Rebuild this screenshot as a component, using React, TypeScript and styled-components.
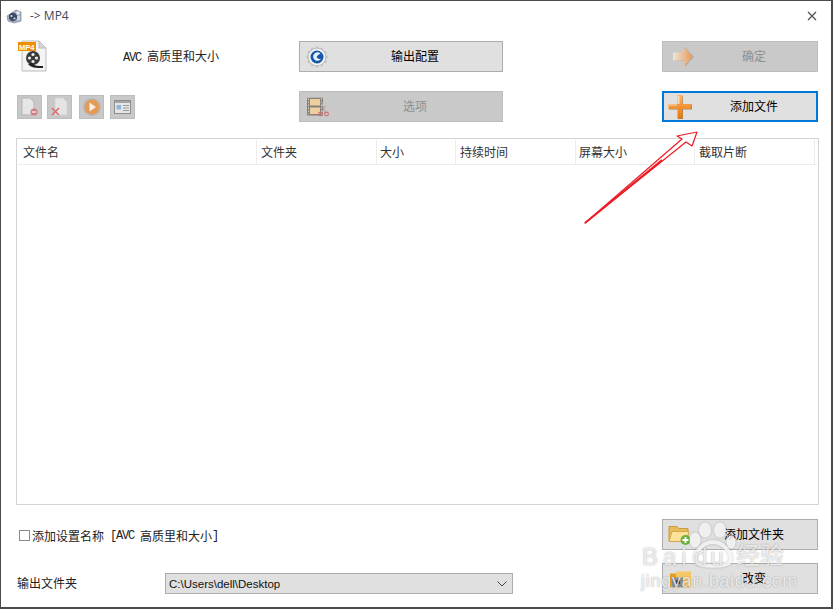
import styled, { createGlobalStyle } from "styled-components";

const GlobalStyle = createGlobalStyle`
  html, body {
    margin: 0;
    padding: 0;
    background: #fff;
  }
`;

const cjk = `"Noto Sans CJK SC", "Liberation Sans", sans-serif`;

const Window = styled.div`
  position: relative;
  box-sizing: border-box;
  width: 833px;
  height: 609px;
  overflow: hidden;
  background: #fff;
  border: 1px solid #4a4a4a;
  border-width: 1px 2px 2px 1px;
  font-family: ${cjk};
  font-size: 13px;
  color: #222;
`;

const TitleBar = styled.div`
  display: flex;
  align-items: center;
  height: 29px;
  padding: 0 14px 0 5px;
`;

const AppTitle = styled.span`
  margin-left: 8px;
  font-family: "Open Sans", sans-serif;
  font-size: 12px;
  color: #3a4a5a;
`;

const CloseButton = styled.div`
  display: flex;
  margin-left: auto;
`;

const Toolbar = styled.div`
  display: grid;
  grid-template-columns: 282px 204px 159px 156px;
  grid-template-rows: 31px 31px;
  row-gap: 19px;
  margin: 11px 0 0 16px;
`;

const PresetCell = styled.div`
  display: flex;
  align-items: center;
  padding-left: 1px;
`;

const PresetName = styled.span`
  margin-left: 75px;
  padding-bottom: 2px;
  font-size: 12px;
`;

const Latin = styled.span`
  font-family: "Liberation Mono", monospace;
  font-size: 12px;
  letter-spacing: -1.2px;
  white-space: pre;
`;

const SmallButtons = styled.div`
  display: flex;
  align-items: center;
`;

const SmallButton = styled.div<{ $gap: number }>`
  display: flex;
  align-items: center;
  justify-content: center;
  box-sizing: border-box;
  width: 25px;
  height: 24px;
  margin-right: ${(p) => p.$gap}px;
  background: #c8c8c8;
  border: 1px solid #bdbdbd;
`;

const Spacer = styled.div``;

const ActionButton = styled.div<{ $disabled?: boolean; $focused?: boolean }>`
  position: relative;
  display: flex;
  align-items: center;
  justify-content: center;
  box-sizing: border-box;
  width: 100%;
  height: 31px;
  font-size: 12px;
  background: ${(p) => (p.$disabled ? "#c9c9c9" : "#e0e0e0")};
  border: ${(p) =>
    p.$focused
      ? "2px solid #0078d7"
      : p.$disabled
      ? "1px solid #bdbdbd"
      : "1px solid #adadad"};
  color: ${(p) => (p.$disabled ? "#8f8f8f" : "#000")};
`;

const ButtonIcon = styled.span<{ $left: number }>`
  position: absolute;
  top: 50%;
  left: ${(p) => p.$left}px;
  display: flex;
  transform: translateY(-50%);
  filter: blur(0.3px);
`;

const ButtonLabel = styled.span<{ $shift?: number }>`
  margin-left: ${(p) => p.$shift ?? 0}px;
  padding-bottom: 2px;
`;

const FileTable = styled.div`
  box-sizing: border-box;
  width: 803px;
  height: 367px;
  margin: 16px 0 0 15px;
  padding: 1px;
  border: 1px solid #d4d4d4;
`;

const HeaderRow = styled.div`
  display: grid;
  grid-template-columns: 239px 120px 79px 120px 119px 120px;
  height: 24px;
  border-bottom: 1px solid #ececec;
`;

const HeaderCell = styled.div<{ $pad: number }>`
  display: flex;
  align-items: center;
  padding: 0 0 2px ${(p) => p.$pad}px;
  border-right: 1px solid #ececec;
  font-size: 12px;
  color: #333;
`;

const Footer = styled.div`
  display: grid;
  grid-template-columns: 148px 349px 148px 156px;
  grid-template-rows: 31px 31px;
  row-gap: 13px;
  align-items: center;
  margin: 14px 0 0 16px;
`;

const SettingCheck = styled.label`
  display: flex;
  align-items: center;
  grid-column: 1 / span 3;
  padding: 2px 0 0 2px;
  font-size: 12px;
`;

const CheckBox = styled.span`
  box-sizing: border-box;
  width: 11px;
  height: 11px;
  margin-right: 2px;
  background: #fff;
  border: 1px solid #8a8a8a;
`;

const OutputLabel = styled.span`
  padding-top: 7px;
  font-size: 12px;
`;

const PathSelect = styled.div`
  display: flex;
  align-items: center;
  justify-content: space-between;
  box-sizing: border-box;
  align-self: end;
  width: 348px;
  height: 21px;
  padding: 0 5px 0 3px;
  background: #e0e0e0;
  border: 1px solid #adadad;
  font-family: "Liberation Sans", sans-serif;
  font-size: 11.5px;
  color: #111;
`;

const Gutter = styled.div``;

const Watermark = styled.div`
  position: absolute;
  left: 639px;
  top: 519px;
  width: 150px;
  height: 76px;
  pointer-events: none;
  color: rgba(255, 255, 255, 0.8);
  text-shadow: 0 0 1.5px rgba(0, 0, 0, 0.4);
`;

const MarkBrand = styled.span<{ $left: number; $spacing: number }>`
  position: absolute;
  left: ${(p) => p.$left}px;
  top: 22px;
  font-family: "Liberation Sans", sans-serif;
  font-size: 24px;
  letter-spacing: ${(p) => p.$spacing}px;
  line-height: 30px;
`;

const MarkCn = styled.span`
  position: absolute;
  left: 96px;
  top: 19px;
  font-size: 24px;
  line-height: 30px;
`;

const MarkUrl = styled.span`
  position: absolute;
  left: 1px;
  top: 50px;
  font-family: "Liberation Sans", sans-serif;
  font-size: 18px;
  letter-spacing: 0.7px;
  line-height: 22px;
`;

const MarkPaw = styled.svg`
  position: absolute;
  left: 48px;
  top: 1px;
  filter: drop-shadow(0 0 1px rgba(0, 0, 0, 0.3));
`;

const ArrowOverlay = styled.svg`
  position: absolute;
  left: -1px;
  top: -1px;
  pointer-events: none;
`;

const CloseIcon = () => (
  <svg width="10" height="10" viewBox="0 0 10 10">
    <path d="M1 1l8 8M9 1L1 9" stroke="#555" strokeWidth="1.3" fill="none" />
  </svg>
);

const AppIcon = () => (
  <svg width="16" height="16" viewBox="0 0 16 16" style={{ filter: "blur(.3px)" }}>
    <path d="M1 8l9-6 5 2v9l-7 2-6-2z" fill="#aab4c2" stroke="#7c8798" strokeWidth=".7" />
    <circle cx="7" cy="9" r="4.200" fill="#3c4c66" />
    <circle cx="5.500" cy="8" r="1" fill="#dfe5ec" />
    <circle cx="8.500" cy="10.500" r="1" fill="#dfe5ec" />
    <circle cx="12" cy="5" r="1.800" fill="#e6ebf1" />
    <rect x="11" y="8" width="3" height="4" fill="#cfd6df" />
  </svg>
);

const Mp4Icon = () => (
  <svg width="30" height="33" viewBox="0 0 30 33">
    <path d="M4 1h17l7 7v23H4z" fill="#f4f4f4" stroke="#bcbcbc" />
    <path d="M21 1v7h7z" fill="#d5d5d5" stroke="#bcbcbc" />
    <rect x="0" y="2" width="18" height="9" fill="#ef8f00" />
    <text x="1" y="9.600" fontSize="7.500" fontWeight="700" fontFamily="Liberation Sans" fill="#fff">
      MP4
    </text>
    <circle cx="15" cy="18" r="7" fill="#3a3a3a" />
    <circle cx="15" cy="14.500" r="1.600" fill="#eee" />
    <circle cx="11.500" cy="18" r="1.600" fill="#eee" />
    <circle cx="18.500" cy="18" r="1.600" fill="#eee" />
    <circle cx="15" cy="21.500" r="1.600" fill="#eee" />
    <path d="M10 24c3 4 8 4 15 4v-2c-6 0-8 0-11-3z" fill="#222" />
  </svg>
);

const RemoveIcon = () => (
  <svg width="19" height="20" viewBox="0 0 19 20">
    <path d="M2 1h8l4 4v13H2z" fill="#e6e6e6" stroke="#b5b5b5" />
    <circle cx="14" cy="15" r="3.600" fill="#d07f7f" />
    <rect x="11.800" y="14.300" width="4.400" height="1.400" fill="#f4e6e6" />
  </svg>
);

const ClearIcon = () => (
  <svg width="19" height="20" viewBox="0 0 19 20">
    <path d="M5 1h8l4 4v13H5z" fill="#e4e4e4" stroke="#d2d2d2" />
    <path d="M2 11l7 7M9 11l-7 7" stroke="#d2706f" strokeWidth="1.600" />
  </svg>
);

const PlayIcon = () => (
  <svg width="20" height="20" viewBox="0 0 20 20">
    <circle cx="10" cy="10" r="9" fill="#b8b8b8" />
    <circle cx="10" cy="10" r="7.400" fill="#e59a55" />
    <path d="M7.500 5.500l6.500 4.500-6.500 4.500z" fill="#f6efe6" />
  </svg>
);

const InfoIcon = () => (
  <svg width="17" height="14" viewBox="0 0 17 14">
    <rect x=".5" y=".5" width="16" height="13" fill="#e6e6e6" stroke="#8d8d8d" />
    <rect x="1" y="1" width="15" height="2" fill="#a5a5a5" />
    <rect x="2.500" y="5" width="4.500" height="4.500" fill="#8db5d8" />
    <path d="M9 5.500h6M9 8h6M9 10.500h6" stroke="#9a9a9a" />
  </svg>
);

const teeth = [0, 30, 60, 90, 120, 150, 180, 210, 240, 270, 300, 330];

const GearIcon = () => (
  <svg width="22" height="22" viewBox="0 0 22 22">
    {teeth.map((a) => (
      <rect
        key={a}
        x="9.500"
        y="0.500"
        width="3"
        height="4"
        fill="#c4c4c4"
        transform={`rotate(${a} 11 11)`}
      />
    ))}
    <circle cx="11" cy="11" r="8.800" fill="#f3f3f3" stroke="#b5b5b5" strokeWidth=".8" />
    <circle cx="11" cy="11" r="6.500" fill="#1557a8" />
    <path d="M14.500 7.500a4.300 4.300 0 1 0 .6 5.300 3.800 3.800 0 0 1-4.500-1.500c.8-1.700 2.200-3 3.900-3.800z" fill="#e7f0fa" />
  </svg>
);

const FilmCutIcon = () => (
  <svg width="22" height="19" viewBox="0 0 22 19">
    <rect x="0" y="0" width="16" height="18" fill="#85807a" />
    <rect x="3" y="1.500" width="10" height="6.500" fill="#efcfa0" />
    <rect x="3" y="10" width="10" height="6.500" fill="#efcfa0" />
    <path d="M1.500 1v16M14.500 1v16" stroke="#d6d2cc" strokeWidth="1" strokeDasharray="1.500 1.500" />
    <path d="M14 4l4.500 11M19 8l-5 8" stroke="#b8a9a9" strokeWidth="1.100" />
    <circle cx="13.500" cy="16.500" r="1.900" fill="none" stroke="#c96f6f" strokeWidth="1.100" />
    <circle cx="19.500" cy="16.500" r="1.900" fill="none" stroke="#c96f6f" strokeWidth="1.100" />
  </svg>
);

const ArrowIcon = () => (
  <svg width="22" height="22" viewBox="0 0 22 22">
    <defs>
      <linearGradient id="okFill" x1="0" x2="1" y1="0" y2="0">
        <stop offset="0" stopColor="#ece6db" />
        <stop offset="1" stopColor="#ea9a58" />
      </linearGradient>
    </defs>
    <path d="M2 7h11V1l9 10-9 10v-6H2z" fill="#b5aca6" />
    <path d="M1 6.500h11V1l8.500 9.500L12 20v-5.500H1z" fill="url(#okFill)" />
  </svg>
);

const PlusIcon = () => (
  <svg width="24" height="24" viewBox="0 0 24 24">
    <defs>
      <linearGradient id="plusFill" x1="0" x2="0" y1="0" y2="1">
        <stop offset="0" stopColor="#f9b46a" />
        <stop offset="1" stopColor="#ec7405" />
      </linearGradient>
    </defs>
    <path d="M10 1h5v8.500h9v5h-9V24h-5v-9.500H1v-5h9z" fill="#8f8473" />
    <path d="M9.500 0h5v9h9v5h-9v9.500h-5V14H.5V9h9z" fill="url(#plusFill)" />
    <path d="M10 1h1.500v8H10zM1 9.500h8v1H1z" fill="#fcdcb4" />
  </svg>
);

const FolderAddIcon = () => (
  <svg width="23" height="21" viewBox="0 0 23 21">
    <path d="M1 2h8l2 2h9v12H1z" fill="#e8bc5c" stroke="#c69a3e" />
    <path d="M1 17l3-10h17l-3 10z" fill="#fde298" stroke="#d0a850" />
    <circle cx="17.500" cy="15.500" r="5" fill="#69b13c" />
    <path d="M17.500 12.500v6M14.500 15.500h6" stroke="#fff" strokeWidth="1.800" />
  </svg>
);

const FolderIcon = () => (
  <svg width="22" height="17" viewBox="0 0 22 17">
    <path d="M0 3h9l1 2h11v12H0z" fill="#e39f1f" />
    <path d="M6 1h15v14H6z" fill="#f5c767" />
    <rect x="2" y="7" width="11" height="10" fill="#8d8d8d" />
    <circle cx="8" cy="11.500" r="2.200" fill="#2b3a55" />
  </svg>
);

const ChevronIcon = () => (
  <svg width="10" height="6" viewBox="0 0 10 6">
    <path d="M.5.500l4.500 4.500 4.500-4.500" stroke="#444" fill="none" />
  </svg>
);

const columns = [
  { name: "文件名", pad: 5 },
  { name: "文件夹", pad: 4 },
  { name: "大小", pad: 3 },
  { name: "持续时间", pad: 4 },
  { name: "屏幕大小", pad: 3 },
  { name: "截取片断", pad: 4 },
];

export default function App() {
  return (
    <>
      <GlobalStyle />
      <Window>
        <TitleBar>
          <AppIcon />
          <AppTitle>-&gt; MP4</AppTitle>
          <CloseButton>
            <CloseIcon />
          </CloseButton>
        </TitleBar>

        <Toolbar>
          <PresetCell>
            <Mp4Icon />
            <PresetName>
              <Latin>AVC </Latin>高质里和大小
            </PresetName>
          </PresetCell>
          <ActionButton>
            <ButtonIcon $left={6}>
              <GearIcon />
            </ButtonIcon>
            <ButtonLabel $shift={28}>输出配置</ButtonLabel>
          </ActionButton>
          <Spacer />
          <ActionButton $disabled>
            <ButtonIcon $left={9}>
              <ArrowIcon />
            </ButtonIcon>
            <ButtonLabel $shift={28}>确定</ButtonLabel>
          </ActionButton>

          <SmallButtons>
            <SmallButton $gap={5}>
              <RemoveIcon />
            </SmallButton>
            <SmallButton $gap={7}>
              <ClearIcon />
            </SmallButton>
            <SmallButton $gap={6}>
              <PlayIcon />
            </SmallButton>
            <SmallButton $gap={0}>
              <InfoIcon />
            </SmallButton>
          </SmallButtons>
          <ActionButton $disabled>
            <ButtonIcon $left={7}>
              <FilmCutIcon />
            </ButtonIcon>
            <ButtonLabel $shift={28}>选项</ButtonLabel>
          </ActionButton>
          <Spacer />
          <ActionButton $focused>
            <ButtonIcon $left={4}>
              <PlusIcon />
            </ButtonIcon>
            <ButtonLabel $shift={28}>添加文件</ButtonLabel>
          </ActionButton>
        </Toolbar>

        <FileTable>
          <HeaderRow>
            {columns.map((c) => (
              <HeaderCell key={c.name} $pad={c.pad}>
                {c.name}
              </HeaderCell>
            ))}
          </HeaderRow>
        </FileTable>

        <Footer>
          <SettingCheck>
            <CheckBox />
            添加设置名称<Latin> [AVC </Latin>高质里和大小<Latin>]</Latin>
          </SettingCheck>
          <ActionButton>
            <ButtonIcon $left={5}>
              <FolderAddIcon />
            </ButtonIcon>
            <ButtonLabel $shift={28}>添加文件夹</ButtonLabel>
          </ActionButton>

          <OutputLabel>输出文件夹</OutputLabel>
          <PathSelect>
            C:\Users\dell\Desktop
            <ChevronIcon />
          </PathSelect>
          <Gutter />
          <ActionButton>
            <ButtonIcon $left={7}>
              <FolderIcon />
            </ButtonIcon>
            <ButtonLabel $shift={28}>改变</ButtonLabel>
          </ActionButton>
        </Footer>

        <ArrowOverlay width="833" height="609" viewBox="0 0 833 609">
          <path
            d="M585 223L682 139L677 136L697 132L692 146L686 142L585 223Z"
            fill="#fff"
            stroke="#ee1c25"
            strokeWidth="1.200"
            strokeLinejoin="round"
          />
          <path d="M585 223L662 160" stroke="#ee1c25" strokeWidth="1.800" />
        </ArrowOverlay>

        <Watermark>
          <MarkPaw width="52" height="48" viewBox="0 0 52 48" fill="currentColor">
            <ellipse cx="7" cy="19" rx="5.500" ry="7.500" />
            <ellipse cx="17" cy="9" rx="6" ry="7.500" />
            <ellipse cx="32" cy="9" rx="6" ry="7.500" />
            <ellipse cx="43" cy="21" rx="4.500" ry="6.500" />
            <path
              d="M8 41c-4-9 8-20 17-20s21 11 17 20c-3 5-31 5-34 0z"
              fill="none"
              stroke="currentColor"
              strokeWidth="4"
            />
          </MarkPaw>
          <MarkBrand $left={2} $spacing={5}>
            Bai
          </MarkBrand>
          <MarkBrand $left={54} $spacing={3}>
            du
          </MarkBrand>
          <MarkCn>经验</MarkCn>
          <MarkUrl>jingyan.baidu.com</MarkUrl>
        </Watermark>
      </Window>
    </>
  );
}
